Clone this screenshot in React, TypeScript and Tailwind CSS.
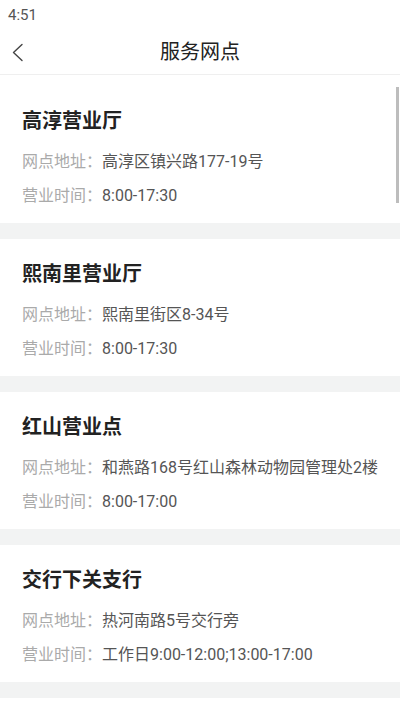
import React from "react";

const items = [
  { name: "高淳营业厅", addr: "高淳区镇兴路177-19号", time: "8:00-17:30" },
  { name: "熙南里营业厅", addr: "熙南里街区8-34号", time: "8:00-17:30" },
  { name: "红山营业点", addr: "和燕路168号红山森林动物园管理处2楼", time: "8:00-17:00" },
  { name: "交行下关支行", addr: "热河南路5号交行旁", time: "工作日9:00-12:00;13:00-17:00" },
];

export default function App() {
  return (
    <div
      className="relative w-[400px] h-[711px] overflow-hidden bg-white"
      style={{ fontFamily: 'Roboto, "Noto Sans CJK SC", sans-serif' }}
    >
      <div className="h-[30px] flex items-center pl-[8px] pt-[1px] text-[15px] text-[#555]">4:51</div>
      <div className="relative h-[45px] flex items-center justify-center border-b border-[#efefef]">
        <svg className="absolute left-[11px] top-[13px]" width="14" height="19" viewBox="0 0 14 19" fill="none">
          <path d="M11 1.5 L2.5 9.5 L11 17.5" stroke="#444" strokeWidth="1.4" strokeLinecap="round" strokeLinejoin="round" />
        </svg>
        <span className="text-[20px] text-[#222] leading-none -mt-[1px]">服务网点</span>
      </div>
      <div className="h-[11px] bg-white" />
      {items.map((it, i) => (
        <div key={i}>
          <div className="h-[137px] bg-white px-[22px] pt-[21px]">
            <div className="text-[20px] leading-[28px] font-bold text-[#222]">{it.name}</div>
            <div className="mt-[17px] text-[16px] leading-[20px]">
              <span className="text-[#aaa]">网点地址：</span>
              <span className="text-[#555]">{it.addr}</span>
            </div>
            <div className="mt-[14px] text-[16px] leading-[20px]">
              <span className="text-[#aaa]">营业时间：</span>
              <span className="text-[#555]">{it.time}</span>
            </div>
          </div>
          <div className="h-[16px] bg-[#f2f3f3]" />
        </div>
      ))}
      <div className="absolute right-[1px] top-[87px] w-[3px] h-[116px] bg-[#bdbdbd]" />
    </div>
  );
}
